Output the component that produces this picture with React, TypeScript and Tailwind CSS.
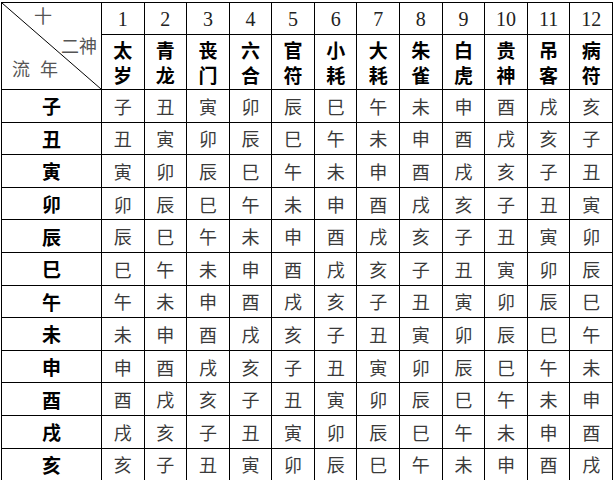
import React from 'react';

const BRANCHES = ['子', '丑', '寅', '卯', '辰', '巳', '午', '未', '申', '酉', '戌', '亥'];

const GODS: [string, string][] = [
  ['太', '岁'],
  ['青', '龙'],
  ['丧', '门'],
  ['六', '合'],
  ['官', '符'],
  ['小', '耗'],
  ['大', '耗'],
  ['朱', '雀'],
  ['白', '虎'],
  ['贵', '神'],
  ['吊', '客'],
  ['病', '符'],
];

const CJK_SANS = { fontFamily: '"Noto Sans CJK SC", "Noto Sans", sans-serif' };
const SERIF = { fontFamily: '"Liberation Serif", "Noto Sans CJK SC", serif' };

function CornerCell() {
  // diagonal split header: 十二神 (top-right) / 流年 (bottom-left)
  return (
    <td rowSpan={2} className="relative border border-black p-0 align-top">
      <svg className="absolute inset-0 h-full w-full" preserveAspectRatio="none" viewBox="0 0 100 100">
        <line x1="0" y1="0" x2="100" y2="100" stroke="black" strokeWidth="1" vectorEffect="non-scaling-stroke" />
      </svg>
      <div className="relative flex h-[86px] flex-col text-[18px] leading-[22px] text-[#555]" style={CJK_SANS}>
        <span className="pl-[32px] pt-[1px]">十</span>
        <span className="self-end pr-[4px] pt-[8px]">二神</span>
        <span className="pl-[10px] pt-[1px] tracking-[10px]">流年</span>
      </div>
    </td>
  );
}

export default function App() {
  return (
    <div className="h-[480px] w-[614px] bg-white pl-[1px] pt-[2px]">
      <table className="w-[611px] table-fixed border-collapse border border-black">
        <colgroup>
          <col className="w-[100px]" />
          {GODS.map((_, i) => (
            <col key={i} className="w-[42.58px]" />
          ))}
        </colgroup>
        <thead>
          <tr className="h-[32px]">
            <CornerCell />
            {GODS.map((_, i) => (
              <th key={i} className="border border-black p-0 text-center text-[20px] font-normal text-[#222]" style={SERIF}>
                {i + 1}
              </th>
            ))}
          </tr>
          <tr className="h-[54px]">
            {GODS.map(([a, b], i) => (
              <th key={i} className="border border-black p-0 text-center text-[19px] font-bold leading-[25px] text-black" style={CJK_SANS}>
                <div>{a}</div>
                <div>{b}</div>
              </th>
            ))}
          </tr>
        </thead>
        <tbody>
          {BRANCHES.map((label, r) => (
            <tr key={label} className="h-[32.6px]">
              <td className="border border-black p-0 text-center text-[19px] font-bold leading-none text-black" style={CJK_SANS}>
                {label}
              </td>
              {GODS.map((_, c) => (
                <td key={c} className="border border-black p-0 text-center text-[18px] leading-none text-[#3a3a3a]" style={CJK_SANS}>
                  {BRANCHES[(r + c) % 12]}
                </td>
              ))}
            </tr>
          ))}
        </tbody>
      </table>
    </div>
  );
}
